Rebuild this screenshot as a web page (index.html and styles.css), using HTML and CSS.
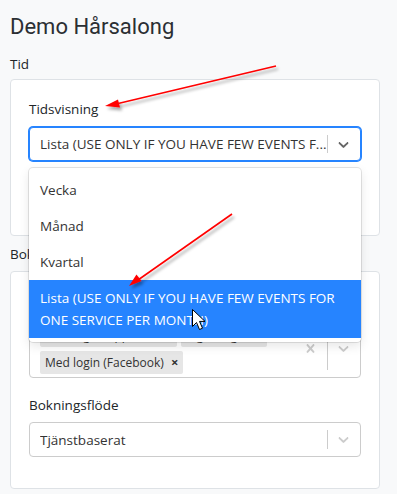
FILE: index.html
```html
<!doctype html>
<html lang="sv">
<head>
  <meta charset="UTF-8">
  <meta name="viewport" content="width=device-width, initial-scale=1.0">
  <title>Demo Hårsalong</title>
  <link rel="stylesheet" href="styles.css">
</head>
<body>
  <h1 class="page-title">Demo Hårsalong</h1>

  <div class="section-label section-first">Tid</div>
  <div class="card card-time">
    <label class="field-label">Tidsvisning</label>
    <div class="select-wrap">
      <div class="select select-focused">
        <div class="select-value">Lista (USE ONLY IF YOU HAVE FEW EVENTS F...</div>
        <span class="select-sep"></span>
        <svg class="chevron" width="20" height="20" viewBox="0 0 20 20"><path d="M4.516 7.548c0.436-0.446 1.043-0.481 1.576 0l3.908 3.747 3.908-3.747c0.533-0.481 1.141-0.446 1.574 0 0.436 0.445 0.408 1.197 0 1.615-0.406 0.418-4.695 4.502-4.695 4.502-0.217 0.223-0.502 0.335-0.787 0.335s-0.57-0.112-0.789-0.335c0 0-4.287-4.084-4.695-4.502s-0.436-1.17 0-1.615z"/></svg>
      </div>
      <div class="menu">
        <div class="option">Vecka</div>
        <div class="option">Månad</div>
        <div class="option">Kvartal</div>
        <div class="option option-selected">Lista (USE ONLY IF YOU HAVE FEW EVENTS FOR ONE SERVICE PER MONTH)</div>
      </div>
    </div>
  </div>

  <div class="section-label">Bokning</div>
  <div class="card card-booking">
    <label class="field-label">Inloggning</label>
    <div class="select select-multi">
      <div class="tags">
        <span class="tag">Med login (Apple ID) <b>×</b></span>
        <span class="tag">Ingen login <b>×</b></span>
        <span class="tag">Med login (Facebook) <b>×</b></span>
      </div>
      <svg class="clear" width="20" height="20" viewBox="0 0 20 20"><path d="M14.348 14.849c-0.469 0.469-1.229 0.469-1.697 0l-2.651-3.030-2.651 3.029c-0.469 0.469-1.229 0.469-1.697 0-0.469-0.469-0.469-1.229 0-1.697l2.758-3.15-2.759-3.152c-0.469-0.469-0.469-1.228 0-1.697s1.228-0.469 1.697 0l2.652 3.031 2.651-3.031c0.469-0.469 1.228-0.469 1.697 0s0.469 1.229 0 1.697l-2.758 3.152 2.758 3.15c0.469 0.469 0.469 1.229 0 1.698z"/></svg>
      <span class="select-sep"></span>
      <svg class="chevron chevron-light" width="20" height="20" viewBox="0 0 20 20"><path d="M4.516 7.548c0.436-0.446 1.043-0.481 1.576 0l3.908 3.747 3.908-3.747c0.533-0.481 1.141-0.446 1.574 0 0.436 0.445 0.408 1.197 0 1.615-0.406 0.418-4.695 4.502-4.695 4.502-0.217 0.223-0.502 0.335-0.787 0.335s-0.57-0.112-0.789-0.335c0 0-4.287-4.084-4.695-4.502s-0.436-1.17 0-1.615z"/></svg>
    </div>

    <label class="field-label field-label-gap">Bokningsflöde</label>
    <div class="select">
      <div class="select-value">Tjänstbaserat</div>
      <span class="select-sep"></span>
      <svg class="chevron chevron-light" width="20" height="20" viewBox="0 0 20 20"><path d="M4.516 7.548c0.436-0.446 1.043-0.481 1.576 0l3.908 3.747 3.908-3.747c0.533-0.481 1.141-0.446 1.574 0 0.436 0.445 0.408 1.197 0 1.615-0.406 0.418-4.695 4.502-4.695 4.502-0.217 0.223-0.502 0.335-0.787 0.335s-0.57-0.112-0.789-0.335c0 0-4.287-4.084-4.695-4.502s-0.436-1.17 0-1.615z"/></svg>
    </div>
  </div>

  <!-- annotations drawn over the screenshot -->
  <svg class="annotations" width="397" height="494" viewBox="0 0 397 494">
    <defs>
      <filter id="shade" x="-10%" y="-10%" width="130%" height="140%">
        <feDropShadow dx="2" dy="3" stdDeviation="1.5" flood-color="#000" flood-opacity="0.35"/>
      </filter>
    </defs>
    <g filter="url(#shade)" fill="#f00" stroke="#f00">
      <line x1="276" y1="66" x2="116" y2="104" stroke-width="1.6"/>
      <polygon points="105,106 118,99.5 120,107.5" stroke="none"/>
      <line x1="232" y1="214" x2="138" y2="280" stroke-width="1.6"/>
      <polygon points="129,286 136.5,274.5 141.5,281" stroke="none"/>
    </g>
    <path class="cursor" d="M192.5 309.5 v17 l4-4 l3 7 l3-1.3 l-3-6.8 h5.5 z"/>
  </svg>
</body>
</html>
```

FILE: styles.css
```css
body {
  margin: 0;
  padding: 0 17px 0 10px;
  background: #f8f9fa;
  color: #212529;
  font-family: 'Open Sans', 'Noto Sans', sans-serif;
  font-size: 13.5px;
  position: relative;
  overflow: hidden;
  height: 494px;
}
.page-title {
  font-family: Roboto, 'Open Sans', sans-serif;
  font-size: 22px;
  font-weight: 400;
  margin: 0;
  padding-top: 12px;
  line-height: 29px;
  color: #2b2f33;
}
.section-label {
  margin-top: 8px;
  line-height: 20px;
}
.section-first {
  margin-top: 13px;
}
.card {
  margin-top: 5px;
  background: #fff;
  border: 1px solid #dee2e6;
  border-radius: 4px;
  padding: 19px 18px 20px 18px;
}
.card-time {
  box-sizing: border-box;
  height: 157px;
}
.card-booking {
  margin-top: 7px;
  padding-bottom: 31px;
}
.field-label {
  display: block;
  line-height: 20px;
  margin-bottom: 8px;
}
.field-label-gap {
  margin-top: 17px;
  margin-bottom: 7px;
}
.select-wrap {
  position: relative;
}
.select {
  display: flex;
  align-items: center;
  height: 35px;
  box-sizing: border-box;
  border: 1px solid #ccc;
  border-radius: 4px;
  background: #fff;
  padding-left: 10px;
  color: #333;
}
.select-focused {
  height: 34px;
  border-color: #2684ff;
  box-shadow: 0 0 0 1px #2684ff;
}
.select-value {
  flex: 1;
  white-space: nowrap;
  overflow: hidden;
}
.select-sep {
  width: 1px;
  align-self: stretch;
  margin: 7px 0;
  background: #ccc;
}
.chevron {
  margin: 0 8px 0 7px;
  width: 17px;
  height: 17px;
  fill: #666;
}
.chevron-light {
  fill: #ccc;
}
.clear {
  width: 17px;
  height: 17px;
  fill: #ccc;
  margin-right: 8px;
}
.select-multi {
  height: 59px;
  align-items: stretch;
}
.select-multi .clear,
.select-multi .chevron {
  align-self: center;
}
.tags {
  flex: 1;
  display: flex;
  flex-wrap: wrap;
  gap: 4px 4px;
  align-content: center;
}
.tag {
  background: #e6e6e6;
  border-radius: 2px;
  font-size: 12px;
  line-height: 23px;
  padding: 0 5px 0 5px;
  color: #333;
}
.tag b {
  margin-left: 4px;
  font-size: 13px;
}
.menu {
  position: absolute;
  top: 41px;
  left: 0;
  right: 0;
  background: #fff;
  border-radius: 4px;
  padding: 4px 0;
  box-shadow: 0 0 0 1px rgba(0, 0, 0, 0.1), 0 4px 11px rgba(0, 0, 0, 0.1);
  z-index: 5;
}
.option {
  padding: 7px 12px 7px 11px;
  line-height: 22px;
  color: #333;
}
.option-selected {
  background: #2684ff;
  color: #fff;
}
.annotations {
  position: absolute;
  top: 0;
  left: 0;
  z-index: 10;
  pointer-events: none;
}
.cursor {
  fill: #fff;
  stroke: #000;
  stroke-width: 1;
  stroke-linejoin: round;
}
```
